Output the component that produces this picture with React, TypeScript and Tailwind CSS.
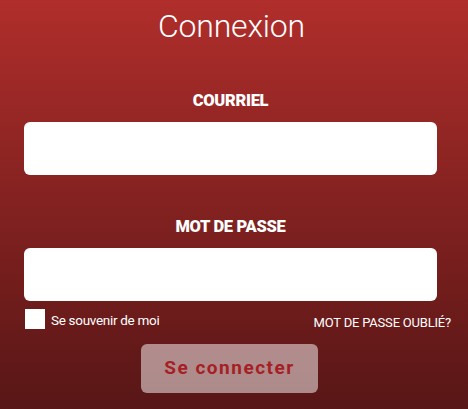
import React from "react";

export default function App() {
  return (
    <div
      className="w-[468px] h-[409px] overflow-hidden bg-gradient-to-b from-[#b02e2b] to-[#581616] text-white flex flex-col items-center"
      style={{ fontFamily: "Roboto, 'Liberation Sans', sans-serif" }}
    >
      <h1 className="mt-[6px] text-[32px] font-light leading-[40px] mr-[5px] tracking-[-0.2px]">Connexion</h1>
      <form className="w-full pl-[24px] pr-[31px] mt-[45px] flex flex-col">
        <label className="text-center text-[16.5px] font-black tracking-[-0.3px] leading-[19px]">COURRIEL</label>
        <input type="email" className="mt-[12px] h-[53px] w-full rounded-[6px] bg-white outline-none" />
        <label className="mt-[42px] text-center text-[16.5px] font-black tracking-[-0.3px] leading-[19px]">MOT DE PASSE</label>
        <input type="password" className="mt-[12px] h-[53px] w-full rounded-[6px] bg-white outline-none" />
        <div className="mt-[8px] h-[20px] flex items-start justify-between">
          <label className="flex items-center gap-[6px]">
            <span className="w-[20px] h-[20px] bg-white ml-[1px] block" />
            <span className="text-[13.5px] tracking-[-0.3px] leading-[16px] mt-[1px]">Se souvenir de moi</span>
          </label>
          <span className="mt-[6px] mr-[-14px] text-[13px] tracking-[-0.2px] leading-[16px] whitespace-nowrap">MOT DE PASSE OUBLIÉ?</span>
        </div>
        <div className="flex justify-center mt-[15px]">
          <button type="button" className="mr-[2px] w-[177px] h-[49px] rounded-[6px] bg-white/50 text-[#a51f25] text-[19px] font-bold tracking-[1.5px]">
            Se connecter
          </button>
        </div>
      </form>
    </div>
  );
}
